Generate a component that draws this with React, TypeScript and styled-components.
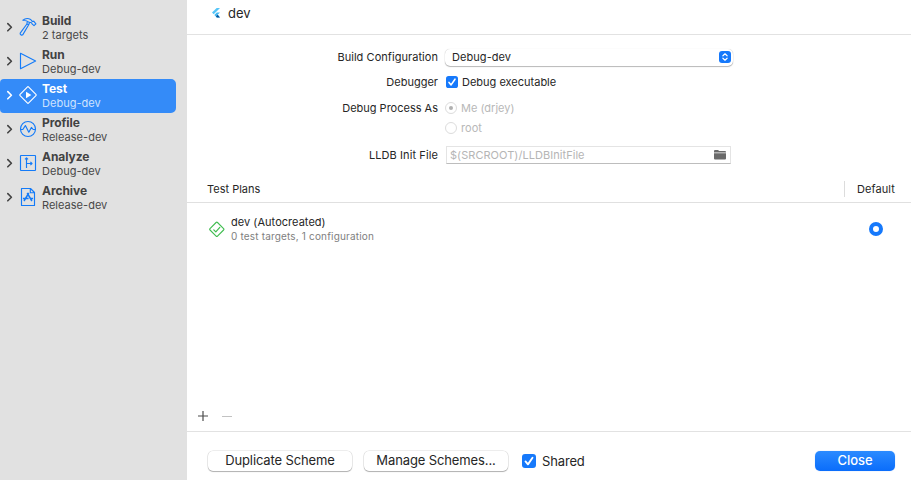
import React from "react";
import styled, { createGlobalStyle } from "styled-components";

const GlobalStyle = createGlobalStyle`
  * { box-sizing: border-box; }
  body { margin: 0; background: #fff; overflow: hidden; }
`;

const Window = styled.div`
  display: flex;
  width: 911px;
  height: 480px;
  overflow: hidden;
  background: #fff;
  color: #262626;
  font-family: Inter, "Liberation Sans", sans-serif;
  font-size: 11px;
  white-space: nowrap;
`;

const Text = styled.span<{ $spacing?: number }>`
  letter-spacing: ${(p) => p.$spacing ?? 0}px;
`;

/* Sidebar */
const Sidebar = styled.nav`
  flex: 0 0 187px;
  padding-top: 11px;
  background: #e1e1e1;
`;

const Action = styled.div<{ $selected?: boolean }>`
  display: flex;
  align-items: center;
  width: 176px;
  height: 34px;
  padding: 0 0 2px 6px;
  border-radius: 4px 5px 5px 4px;
  background: ${(p) => (p.$selected ? "#348bf8" : "transparent")};
  color: ${(p) => (p.$selected ? "#fff" : "#424242")};
  & > svg { flex: none; }
`;

const ActionText = styled.div`
  display: flex;
  flex-direction: column;
  margin-left: 4px;
`;

const ActionTitle = styled.span`
  height: 15px;
  line-height: 15px;
  font-size: 12px;
  font-weight: 700;
  letter-spacing: -0.06px;
`;

const ActionSub = styled.span<{ $selected?: boolean }>`
  height: 14px;
  line-height: 14px;
  font-size: 11px;
  color: ${(p) => (p.$selected ? "#cfe3fe" : "#484848")};
  letter-spacing: 0.02px;
`;

const IconSlot = styled.span`
  display: flex;
  margin-left: 4px;
`;

/* Main pane */
const Main = styled.main`
  display: flex;
  flex: 1;
  flex-direction: column;
`;

const Header = styled.header`
  display: flex;
  align-items: flex-start;
  gap: 7px;
  height: 35px;
  padding: 5px 0 0 24px;
  border-bottom: 1px solid #e2e2e2;
  font-size: 13px;
  line-height: 17px;
  & svg { margin-top: 2px; }
`;

const Form = styled.section`
  display: grid;
  grid-template-columns: 251px 1fr;
  grid-template-rows: 26px 24px 28px 12px 42px;
  column-gap: 7px;
  align-items: center;
  padding-top: 9px;
`;

const Label = styled.label`
  text-align: right;
`;

const Select = styled.div`
  display: flex;
  align-items: center;
  justify-content: space-between;
  width: 288px;
  height: 17px;
  padding: 0 2px 0 7px;
  border-radius: 5px;
  box-shadow: 0 0 1px rgba(0, 0, 0, 0.28), 0 1px 1px rgba(0, 0, 0, 0.26);
  clip-path: inset(0 -3px -3px -3px);
  background: #fff;
`;

const Option = styled.div<{ $gap: number; $muted?: boolean }>`
  display: flex;
  align-items: center;
  gap: ${(p) => p.$gap}px;
  color: ${(p) => (p.$muted ? "#b8b8b8" : "inherit")};
  & svg { flex: none; }
`;

const CheckOption = styled(Option)`
  padding-left: 1px;
`;

const Radio = styled.span<{ $on?: boolean }>`
  display: grid;
  place-items: center;
  width: 12px;
  height: 12px;
  border: 1px solid #dcdcdc;
  border-radius: 50%;
  &::after {
    content: "";
    width: 4px;
    height: 4px;
    border-radius: 50%;
    background: ${(p) => (p.$on ? "#b0b0b0" : "transparent")};
  }
`;

const Field = styled.div`
  display: flex;
  align-items: center;
  justify-content: space-between;
  width: 285px;
  height: 18px;
  margin-left: 1px;
  padding: 0 4px 0 3px;
  border: 1px solid #e4e4e4;
  border-bottom-color: #bdbdbd;
  color: #b5b5b5;
  & svg { margin-bottom: 1px; }
`;

const TableHead = styled.div`
  display: flex;
  align-items: center;
  justify-content: space-between;
  height: 27px;
  padding-left: 20px;
  border-bottom: 1px solid #e0e0e0;
`;

const DefaultHead = styled.div`
  display: flex;
  align-items: center;
  width: 67px;
  height: 16px;
  padding-left: 12px;
  border-left: 1px solid #dcdcdc;
`;

const PlanRow = styled.div`
  display: flex;
  align-items: center;
  height: 52px;
  padding: 0 28px 0 21px;
`;

const PlanText = styled.div`
  display: flex;
  flex: 1;
  flex-direction: column;
  margin-left: 6px;
  line-height: 14px;
`;

const PlanSub = styled(Text)`
  font-size: 10px;
  color: #808080;
`;

const SelectedRadio = styled.span`
  width: 14px;
  height: 14px;
  border: 4px solid #1679fb;
  border-radius: 50%;
  background: #fff;
`;

const Spacer = styled.div`
  flex: 1;
`;

const ListTools = styled.div`
  display: flex;
  align-items: center;
  gap: 14px;
  height: 31px;
  padding-left: 11px;
  border-bottom: 1px solid #e2e2e2;
`;

const Footer = styled.footer`
  display: flex;
  align-items: center;
  height: 48px;
  padding: 10px 16px 0 21px;
  font-size: 13px;
`;

const Button = styled.button<{ $primary?: boolean; $spacing: number }>`
  display: flex;
  align-items: center;
  justify-content: center;
  width: ${(p) => (p.$primary ? 80 : 144)}px;
  height: 20px;
  margin: 0 ${(p) => (p.$primary ? 0 : 12)}px 0 ${(p) => (p.$primary ? "auto" : 0)};
  padding: 0 0 2px;
  border: 0;
  border-radius: 5px;
  background: ${(p) => (p.$primary ? "linear-gradient(#2b8bff, #0a6dfb)" : "#fff")};
  box-shadow: ${(p) =>
    p.$primary
      ? "0 0 1px rgba(0, 90, 220, 0.4)"
      : "0 0 0 0.5px rgba(0, 0, 0, 0.14), 0 1px 1px rgba(0, 0, 0, 0.26)"};
  color: ${(p) => (p.$primary ? "#fff" : "#262626")};
  font: ${(p) => (p.$primary ? 500 : 400)} 13px Inter, sans-serif;
  letter-spacing: ${(p) => p.$spacing}px;
`;

const SharedOption = styled(Option)`
  margin: 0 0 1px 2px;
`;

const Chevron = () => (
  <svg width="8" height="12" viewBox="0 0 8 12" fill="none" stroke="currentColor" strokeWidth="1.6" strokeLinecap="round" strokeLinejoin="round">
    <path d="M1.8 2.6 5.4 6.2 1.8 9.8" />
  </svg>
);

const Check = ({ size }: { size: number }) => (
  <svg width={size} height={size} viewBox="0 0 12 12">
    <rect width="12" height="12" rx="2.6" fill="#1679fb" />
    <path d="M3 6.4 5.1 8.9 9 3.2" fill="none" stroke="#fff" strokeWidth="1.6" strokeLinecap="round" strokeLinejoin="round" />
  </svg>
);

const glyphs: Record<string, React.ReactNode> = {
  Build: (
    <>
      <path d="M4.9 3.3C6.8 1.6 10.2 1.2 12.7 2.5L14.2 4.4 15.7 4.2 17.9 6.8 16 8.6 14 6.9 13.6 5.8 11.2 5.3C10 4.2 7.5 3.4 4.9 3.3Z" />
      <path d="M9.3 4.4 8.9 7 2.2 16.2C1.8 17.3 3.6 18.7 4.7 17.9L10.7 7.8 11.6 5.4M8.9 7 10.7 7.8" />
    </>
  ),
  Run: <path d="M2.5 2.3V17.7L17.6 10Z" />,
  Test: (
    <>
      <rect x="3.9" y="3.9" width="12.2" height="12.2" rx="1" transform="rotate(45 10 10)" />
      <path d="M8 6.8V13.2L13.4 10Z" fill="currentColor" stroke="none" />
    </>
  ),
  Profile: (
    <>
      <circle cx="10" cy="10" r="7.5" />
      <path d="M2.5 10.5H4.8L7.4 6.6 10.8 13.2 13.4 8.4 15.2 10.5H17.5" />
    </>
  ),
  Analyze: (
    <>
      <rect x="2.5" y="2.5" width="15" height="15" rx=".5" />
      <path d="M8.5 15V5M7 6.4 8.5 4.8 10 6.4M8.5 10.5H14M12.4 8.9 14 10.5 12.4 12.1" />
    </>
  ),
  Archive: (
    <>
      <path d="M3.5 1.5H12.5L16.5 5.5V18.5H3.5ZM12.3 1.8V5.7H16.2" />
      <path d="M9.2 6 13.9 14M10.8 6 6 14M4.9 11.6H10.6M12.9 11.6H15.1" strokeWidth="1.5" />
    </>
  ),
};

const ActionIcon = ({ name, selected }: { name: string; selected?: boolean }) => (
  <svg width="20" height="20" viewBox="0 0 20 20" fill="none" stroke="currentColor" color={selected ? "#fff" : "#147bf8"} strokeWidth="1.15" strokeLinejoin="round">
    {glyphs[name]}
  </svg>
);

const actions = [
  { name: "Build", sub: "2 targets" },
  { name: "Run", sub: "Debug-dev" },
  { name: "Test", sub: "Debug-dev", selected: true },
  { name: "Profile", sub: "Release-dev" },
  { name: "Analyze", sub: "Debug-dev" },
  { name: "Archive", sub: "Release-dev" },
];

export default function App() {
  return (
    <Window>
      <GlobalStyle />
      <Sidebar>
        {actions.map((a) => (
          <Action key={a.name} $selected={a.selected}>
            <Chevron />
            <IconSlot>
              <ActionIcon name={a.name} selected={a.selected} />
            </IconSlot>
            <ActionText>
              <ActionTitle>{a.name}</ActionTitle>
              <ActionSub $selected={a.selected}>{a.sub}</ActionSub>
            </ActionText>
          </Action>
        ))}
      </Sidebar>
      <Main>
        <Header>
          <svg width="10" height="12" viewBox="0 0 10 12">
            <path d="M5.7 1H9L2.7 7.2 1 5.6Z" fill="#55c5f8" />
            <path d="M5.8 5.5H9L6.7 7.8 9 10.5H5.8L3.3 7.9Z" fill="#45b9f2" />
            <path d="M5 9.5 6.7 7.8 9 10.5H5.8Z" fill="#07549b" />
          </svg>
          <Text>dev</Text>
        </Header>
        <Form>
          <Label><Text $spacing={0.05}>Build Configuration</Text></Label>
          <Select>
            <Text $spacing={0.06}>Debug-dev</Text>
            <svg width="12" height="12" viewBox="0 0 12 12">
              <rect width="12" height="12" rx="3" fill="#1679fb" />
              <path d="M3.9 4.8 6 2.8 8.1 4.8M3.9 7.2 6 9.2 8.1 7.2" fill="none" stroke="#fff" strokeWidth="1.2" strokeLinecap="round" strokeLinejoin="round" />
            </svg>
          </Select>
          <Label><Text>Debugger</Text></Label>
          <CheckOption $gap={4}>
            <Check size={12} />
            <Text>Debug executable</Text>
          </CheckOption>
          <Label><Text>Debug Process As</Text></Label>
          <Option $gap={4} $muted>
            <Radio $on />
            <Text>Me (drjey)</Text>
          </Option>
          <span />
          <Option $gap={4} $muted>
            <Radio />
            <Text $spacing={0.05}>root</Text>
          </Option>
          <Label><Text $spacing={0.1}>LLDB Init File</Text></Label>
          <Field>
            <Text $spacing={0.05}>$(SRCROOT)/LLDBInitFile</Text>
            <svg width="12" height="10" viewBox="0 0 12 10" fill="#6a6a6a">
              <path d="M0 2.5V1Q0 0 1 0H4L5.2 1H11Q12 1 12 2V2.5Z" />
              <path d="M0 3.3H12V8.5Q12 9.5 11 9.5H1Q0 9.5 0 8.5Z" />
            </svg>
          </Field>
        </Form>
        <TableHead>
          <Text>Test Plans</Text>
          <DefaultHead><Text $spacing={0.08}>Default</Text></DefaultHead>
        </TableHead>
        <PlanRow>
          <svg width="17" height="17" viewBox="0 0 17 17" fill="none" stroke="#40bd50" strokeLinejoin="round" strokeLinecap="round">
            <rect x="3.5" y="3" width="10.6" height="10.6" rx="1" strokeWidth="1.1" transform="rotate(45 8.8 8.3)" />
            <path d="M5.8 8.8 7.8 10.8 11.8 6.4" strokeWidth="1.2" />
          </svg>
          <PlanText>
            <Text $spacing={0.04}>dev (Autocreated)</Text>
            <PlanSub $spacing={0.17}>0 test targets, 1 configuration</PlanSub>
          </PlanText>
          <SelectedRadio />
        </PlanRow>
        <Spacer />
        <ListTools>
          <svg width="10" height="10" viewBox="0 0 10 10" stroke="#4c4c4c" strokeWidth="1.2"><path d="M0 5H10M5 0V10" /></svg>
          <svg width="10" height="10" viewBox="0 0 10 10" stroke="#c2c2c2"><path d="M0 5.5H10" /></svg>
        </ListTools>
        <Footer>
          <Button $spacing={-0.12}>Duplicate Scheme</Button>
          <Button $spacing={-0.12}>Manage Schemes...</Button>
          <SharedOption $gap={6}>
            <Check size={14} />
            <Text $spacing={-0.15}>Shared</Text>
          </SharedOption>
          <Button $primary $spacing={-0.05}>Close</Button>
        </Footer>
      </Main>
    </Window>
  );
}
